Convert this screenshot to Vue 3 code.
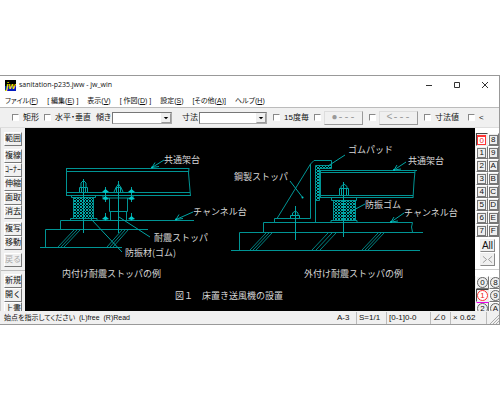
<script setup>
import { ref } from 'vue'

const menus = [
  { name: 'ファイル', key: 'F', open: '(', close: ')' },
  { name: '[ 編集', key: 'E', open: '(', close: ') ]' },
  { name: '表示', key: 'V', open: '(', close: ')' },
  { name: '[ 作図', key: 'D', open: '(', close: ') ]' },
  { name: '設定', key: 'S', open: '(', close: ')' },
  { name: '[その他', key: 'A', open: '(', close: ')]' },
  { name: 'ヘルプ', key: 'H', open: '(', close: ')' },
]
const commandGroups = [
  ['範囲'],
  ['複線', 'ｺｰﾅｰ', '伸縮', '面取', '消去'],
  ['複写', '移動'],
  ['戻る'],
]
const fileCommands = ['新規', '開く', '上書']
const layers = ['0', '8', '1', '9', '2', 'A', '3', 'B', '4', 'C', '5', 'D', '6', 'E', '7', 'F']
const groups = ['0', '8', '1', '9', '2', 'A']
const activeLayer = ref('0')
const activeGroup = ref('1')

const lines = [
  // left assembly: frame beam
  'M66 168.5H189M66 171.5H189M66.5 168V196M66 192.5H190M66 195.5H191M189 168L188.500 173L190.500 196',
  // rubber mount plates, channel and foundation
  'M71.500 195.500V197.500H95.500V195.500M70.500 220V218.500H97V220M60.500 229V220.500H194M45.500 247V229.500H148M40 247.500H122',
  'M73.500 198V219M93.500 198V219',
  // stopper
  'M103 195.500V198H133V195.500M109.500 198V211.500H127.500V198M110.500 212V220M126.500 212V220',
  // right assembly: frame beam
  'M320 170.500H417M321 172.500H415M320.500 170V198M321 195.500H413M321 197.500H413M415 171L414 182L413 198',
  // bracket
  'M277 218.500L310.500 164L314 160.500H331.500V168.500H319.500M310.500 164V218.500M315.500 222V165.500H331.500M319.500 168V200.500H315.500',
  'M274.500 222V218.500H310.500M263.500 232V222.500H412.500L411.500 227L412.500 232M239.500 250V232.500H423M231 250.500H420',
  // mount
  'M331.500 198V200.500H356.500V198M331 222V220.500H357V222M333.500 201V220M355.500 201V220',
]
const nuts = [
  'M79.500 192V187.500H87.500V192M81 187V183L83.500 180.500L86 183V187M81.500 188V192M85.500 188V192',
  'M114 192L116 187.500H121L123 192M116 187.500L118.500 184L121 187.500M116.500 188V192M120.500 188V192',
  'M290.500 218V215.500H299.500V218M292.500 215V213L295.500 211L298 213V215',
  'M339.500 195V188.500H348.500V195M341 188V186.500L344 184L347 186.500V188M341.500 189V195M346.500 189V195',
]
const smallBolts = [[105, 192], [105, 199], [131, 192], [131, 199], [105, 219], [131, 219]]
const hatches = [
  { top: 74, bottom: 58, y1: 230, y2: 247, step: 3 },
  { top: 122, bottom: 107, y1: 230, y2: 247, step: 3 },
  { top: 266, bottom: 250, y1: 233, y2: 250, step: 3 },
  { top: 328, bottom: 312, y1: 233, y2: 250, step: 4 },
  { top: 378, bottom: 362, y1: 233, y2: 250, step: 3 },
]
const leaders = [
  [164, 160, 152, 167.5, true],
  [193, 212, 176, 219.5, true],
  [150, 237, 119, 217, false],
  [122, 252, 91, 219, false],
  [345, 155, 328, 166, false],
  [290, 181, 303, 198, false],
  [406, 162, 394, 170, true],
  [404, 213, 391, 222, true],
  [365, 204, 348, 213, false],
]
const labels = [
  [164, 163, '共通架台'],
  [193, 215, 'チャンネル台'],
  [154, 241, '耐震ストッパ'],
  [125, 256, '防振材(ゴム)'],
  [62, 277, '内付け耐震ストッパの例'],
  [175, 299, '図１　床置き送風機の設置'],
  [234, 180, '鋼製ストッパ'],
  [348, 153, 'ゴムパッド'],
  [408, 164, '共通架台'],
  [365, 208, '防振ゴム'],
  [404, 216, 'チャンネル台'],
  [304, 277, '外付け耐震ストッパの例'],
]
</script>

<template>
  <div class="page">
    <div class="window">
      <header class="titlebar">
        <svg class="logo" viewBox="0 0 11 11" aria-hidden="true">
          <rect width="11" height="11" fill="#000" />
          <path d="M0 6H11V11H0Z" fill="#0018c0" />
          <text x="1" y="9" class="logo-text">jw</text>
        </svg>
        <span class="title">sanitation-p235.jww - jw_win</span>
        <div class="window-buttons">
          <button type="button" aria-label="最小化"><svg viewBox="0 0 8 8"><path d="M1 4.500H7" /></svg></button>
          <button type="button" aria-label="最大化"><svg viewBox="0 0 8 8"><path d="M1.500 1.500H6.500V6.500H1.500Z" /></svg></button>
          <button type="button" aria-label="閉じる"><svg viewBox="0 0 8 8"><path d="M1 1L7 7M7 1L1 7" /></svg></button>
        </div>
      </header>

      <nav class="menubar">
        <button v-for="m in menus" :key="m.key" type="button">{{ m.name }}{{ m.open }}<u>{{ m.key }}</u>{{ m.close }}</button>
      </nav>

      <div class="options">
        <label><input type="checkbox" />矩形</label>
        <label><input type="checkbox" />水平・垂直</label>
        <label class="field">傾き
          <span class="combo"><select><option></option></select><svg viewBox="0 0 9 9"><path d="M2 3.500H7L4.500 6Z" /></svg></span>
        </label>
        <label class="field size">寸法
          <span class="combo wide"><select><option></option></select><svg viewBox="0 0 9 9"><path d="M2 3.500H7L4.500 6Z" /></svg></span>
        </label>
        <label><input type="checkbox" />15度毎</label>
        <span class="pair"><input type="checkbox" aria-label="端点" /><button type="button" class="style-button" disabled>●---</button></span>
        <span class="pair"><input type="checkbox" aria-label="矢印" /><button type="button" class="style-button" disabled>&lt;---</button></span>
        <label><input type="checkbox" />寸法値</label>
        <label class="last"><input type="checkbox" />&lt;</label>
      </div>

      <main class="workspace">
        <aside class="tools">
          <div v-for="(g, i) in commandGroups" :key="i" class="tool-group">
            <button v-for="c in g" :key="c" type="button" :disabled="c === '戻る'">{{ c }}</button>
          </div>
          <div class="tool-group file-group">
            <button v-for="c in fileCommands" :key="c" type="button">{{ c }}</button>
          </div>
        </aside>

        <svg class="drawing" viewBox="25 128 450 183" role="img" aria-label="床置き送風機の設置">
          <defs>
            <pattern id="rubber" width="3" height="3" patternUnits="userSpaceOnUse">
              <path d="M0 0L3 3M3 0L0 3" stroke="#00a5a5" stroke-width="1" />
            </pattern>
          </defs>
          <rect x="74" y="198" width="20" height="21" fill="url(#rubber)" />
          <rect x="334" y="201" width="21" height="19" fill="url(#rubber)" />
          <path d="M316 166H331V168H319V200H316Z" fill="url(#rubber)" />
          <g class="lines">
            <path v-for="(d, i) in lines" :key="i" :d="d" />
          </g>
          <g class="hatch">
            <template v-for="(h, i) in hatches" :key="i">
              <path v-for="n in 3" :key="n" :d="`M${h.top + (n - 1) * h.step} ${h.y1}L${h.bottom + (n - 1) * h.step} ${h.y2}`" />
            </template>
          </g>
          <g class="bolts">
            <path v-for="(d, i) in nuts" :key="i" :d="d" />
            <path d="M83.500 179V233M118.500 181V233M105.500 187V202M131.500 187V202M105.500 213V221M131.500 213V221M295.500 206V240M343.500 182V237" />
            <path v-for="(b, i) in smallBolts" :key="'s' + i" class="solid" :d="`M${b[0] - 3} ${b[1]}L${b[0] + 0.5} ${b[1] - 3}L${b[0] + 4} ${b[1]}L${b[0] + 0.5} ${b[1] + 1}Z`" />
          </g>
          <g class="leaders">
            <template v-for="(l, i) in leaders" :key="i">
              <path :d="`M${l[0]} ${l[1]}L${l[2]} ${l[3]}`" />
              <path v-if="l[4]" :d="`M${l[2] + 3} ${l[3] - 5}L${l[2]} ${l[3]}L${l[2] + 7} ${l[3] - 1}`" />
              <circle v-if="l[4]" :cx="l[2]" :cy="l[3]" r="1" />
            </template>
            <circle cx="302.500" cy="197.500" r="1" />
          </g>
          <text v-for="(t, i) in labels" :key="i" :x="t[0]" :y="t[1]" class="label">{{ t[2] }}</text>
        </svg>

        <aside class="layers">
          <div class="layer-grid">
            <button v-for="l in layers" :key="l" type="button" :class="{ active: l === activeLayer }" @click="activeLayer = l"><span>{{ l }}</span></button>
          </div>
          <div class="layer-actions">
            <button type="button">All</button>
            <button type="button" aria-label="切替"><svg viewBox="0 0 12 9"><path d="M1 1L5 4.500L1 8M11 1L7 4.500L11 8" /></svg></button>
          </div>
          <div class="layer-grid group-grid">
            <button v-for="g in groups" :key="g" type="button" :class="{ active: g === activeGroup, marked: g === '2' }" @click="activeGroup = g"><span>{{ g }}</span></button>
          </div>
        </aside>
      </main>

      <footer class="statusbar">
        <span class="message">始点を指示してください&nbsp; (L)free&nbsp; (R)Read</span>
        <span class="cell paper">A-3</span>
        <span class="cell scale">S=1/1</span>
        <span class="cell layer">[0-1]0-0</span>
        <span class="cell angle">∠0</span>
        <span class="cell zoom">× 0.62</span>
        <svg class="grip" viewBox="0 0 12 12" aria-hidden="true"><path d="M3 12L12 3M6 12L12 6M9 12L12 9" /></svg>
      </footer>
    </div>
  </div>
</template>

<style>
body {
  margin: 0;
  background: #fff;
}
</style>

<style scoped>
* {
  box-sizing: border-box;
}
.page {
  padding: 75px 0;
  font: 8px/12px "Liberation Sans", "Noto Sans CJK JP", sans-serif;
  color: #111;
}
button {
  font: inherit;
  color: inherit;
  padding: 0;
  margin: 0;
  border: 0;
  background: none;
  white-space: nowrap;
}
.window {
  border: 1px solid #999;
  border-width: 1px 1px 1px 0;
  background: #fff;
}
.titlebar {
  display: flex;
  align-items: center;
  height: 18px;
  padding: 0 10px 0 5px;
  gap: 3px;
}
.logo {
  width: 11px;
  height: 11px;
}
.logo-text {
  font: italic bold 9px "Liberation Sans", sans-serif;
  fill: #ffe900;
}
.title {
  font: 7px/12px "Open Sans", sans-serif;
}
.window-buttons {
  display: flex;
  gap: 20px;
  margin-left: auto;
}
.window-buttons button {
  display: flex;
}
.window-buttons svg {
  width: 8px;
  height: 8px;
  fill: none;
  stroke: #333;
}
.menubar {
  display: flex;
  height: 13px;
  padding: 0 5px;
  gap: 9px;
  font-size: 7px;
  font-feature-settings: "palt";
}
.menubar u {
  text-underline-offset: 1px;
}
.options {
  display: flex;
  align-items: center;
  height: 21px;
  padding: 0 12px;
  gap: 5px;
  border-top: 1px solid #bbb;
  background: #f0f0f0;
  border-bottom: 1px solid #ddd;
  white-space: nowrap;
  font-feature-settings: "palt";
}
.options label,
.pair {
  display: flex;
  align-items: center;
  gap: 4px;
}
.options .pair {
  gap: 3px;
  margin-right: 1px;
}
.options .field {
  gap: 1px;
}
.options .size {
  margin-left: 5px;
  margin-right: 1px;
}
.options .last {
  margin-left: 4px;
}
.options input {
  appearance: none;
  width: 7px;
  height: 7px;
  margin: 0;
  border: 1px solid #fff;
  border-top-color: #888;
  border-left-color: #888;
  background: #fff;
}
.combo {
  display: flex;
  align-items: center;
  width: 60px;
  height: 12px;
  background: #fff;
  border: 1px solid #aaa;
  border-top-color: #777;
  border-left-color: #777;
}
.combo.wide {
  width: 68px;
}
.combo select {
  appearance: none;
  flex: 1;
  min-width: 0;
  height: 10px;
  padding: 0;
  border: 0;
  background: #fff;
}
.combo svg {
  width: 10px;
  height: 10px;
  background: #f0f0f0;
  border: 1px solid #999;
  border-top-color: #eee;
  border-left-color: #eee;
}
.style-button {
  width: 39px;
  height: 14px;
  border: 1px solid #999;
  border-top-color: #ddd;
  border-left-color: #ddd;
  color: #999;
  font: 10px/10px "Liberation Mono", "DejaVu Sans Mono", monospace;
}
.workspace {
  display: flex;
  background: #f0f0f0;
}
.tools {
  width: 25px;
  contain: size;
  overflow: hidden;
  padding: 4px 3px 0;
  border-left: 1px solid #ccc;
}
.tool-group {
  display: flex;
  flex-direction: column;
  margin-bottom: 3px;
}
.tool-group button {
  height: 14px;
  line-height: 12px;
  text-align: center;
  border: 1px solid #777;
  border-top-color: #fff;
  border-left-color: #fff;
}
.tool-group button:disabled {
  color: #aaa;
}
.file-group {
  margin: 0 -3px;
  padding: 3px 3px 0;
  border-top: 1px solid #bbb;
}
.drawing {
  display: block;
  flex: 1;
  min-width: 0;
  background: #000;
}
.lines,
.hatch,
.bolts,
.leaders {
  fill: none;
  stroke: #009494;
}
.hatch {
  stroke: #008484;
}
.bolts,
.leaders {
  stroke: #00a5a5;
}
.solid,
.leaders circle {
  fill: #00c8c8;
  stroke: none;
}
.label {
  font: 9px "Noto Sans CJK JP", sans-serif;
  fill: #d8d8d8;
}
.layers {
  width: 24px;
  contain: size;
  overflow: hidden;
  padding-top: 5px;
  background: #fff;
}
.layer-grid {
  display: grid;
  grid-template-columns: 1fr 1fr;
  padding-left: 1px;
  background: #eee;
}
.layer-grid button {
  display: flex;
  align-items: center;
  justify-content: center;
  height: 13px;
  border: 1px solid #777;
  border-top-color: #fff;
  border-left-color: #fff;
  font: 8px/8px "Liberation Sans", sans-serif;
}
.layer-grid span {
  width: 9px;
  height: 10px;
  border: 1px solid #777;
  text-align: center;
}
.layer-grid .active {
  border-color: #444 #eee #eee #444;
  color: #e22;
}
.layer-grid .active span {
  border-color: #f33;
  border-top-width: 2px;
  background: #fff;
  line-height: 7px;
}
.layer-actions {
  display: flex;
  flex-direction: column;
  gap: 1px;
  padding: 2px 4px 3px 5px;
  border-bottom: 1px solid #ccc;
}
.layer-actions button {
  display: flex;
  align-items: center;
  justify-content: center;
  height: 13px;
  border: 1px solid #888;
  border-top-color: #eee;
  border-left-color: #eee;
  background: #f0f0f0;
  font-size: 10px;
}
.layer-actions svg {
  width: 11px;
  height: 9px;
  fill: none;
  stroke: #999;
}
.group-grid {
  margin-top: 6px;
}
.group-grid span,
.group-grid .active span {
  flex: none;
  width: 11px;
  height: 11px;
  border: 1px solid #666;
  border-radius: 50%;
  line-height: 9px;
}
.group-grid .active span {
  border-color: #f33;
}
.group-grid .marked {
  border-top-color: #e0e;
}
.statusbar {
  display: flex;
  align-items: center;
  height: 13px;
  padding-left: 4px;
  background: #f0f0f0;
  white-space: nowrap;
  font-feature-settings: "palt";
}
.message {
  flex: 1;
  font-size: 7px;
}
.cell {
  padding-left: 2px;
  border-right: 1px solid #bbb;
}
.paper {
  width: 22px;
}
.scale {
  width: 30px;
}
.layer {
  width: 44px;
}
.angle {
  width: 20px;
}
.zoom {
  width: 36px;
}
.grip {
  width: 12px;
  height: 12px;
  stroke: #aaa;
}
</style>
